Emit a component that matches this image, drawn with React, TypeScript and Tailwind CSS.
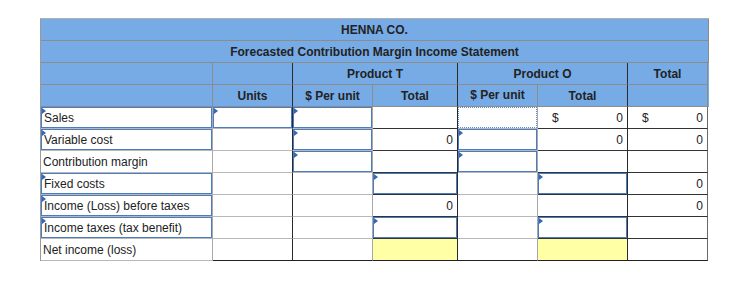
import React from "react";

type Kind = "plain" | "input" | "dotted" | "yellow";
type Cell = { k: Kind; t?: string; d?: boolean };

const cols = [
  { w: "w-[172px]", r: "border-r-[#a8a8a8]", b: "border-b-[#b8b8b8]" },
  { w: "w-[80px]", r: "border-r-[#2a2a2a]", b: "border-b-[#b8b8b8]" },
  { w: "w-[80px]", r: "border-r-[#a8a8a8]", b: "border-b-[#b8b8b8]" },
  { w: "w-[85px]", r: "border-r-[#2a2a2a]", b: "border-b-[#333333]" },
  { w: "w-[80px]", r: "border-r-[#a8a8a8]", b: "border-b-[#b8b8b8]" },
  { w: "w-[90px]", r: "border-r-[#2a2a2a]", b: "border-b-[#333333]" },
  { w: "w-[80px]", r: "border-r-[#6a6a6a]", b: "border-b-[#333333]" },
];

const P: Cell = { k: "plain" };
const I: Cell = { k: "input" };
const Z: Cell = { k: "plain", t: "0" };
const Y: Cell = { k: "yellow" };

const rows: Cell[][] = [
  [{ k: "input", t: "Sales" }, I, I, P, { k: "dotted" }, { k: "plain", t: "0", d: true }, { k: "plain", t: "0", d: true }],
  [{ k: "input", t: "Variable cost" }, P, I, Z, I, Z, Z],
  [{ k: "plain", t: "Contribution margin" }, P, I, P, I, P, P],
  [{ k: "input", t: "Fixed costs" }, P, P, I, P, I, Z],
  [{ k: "input", t: "Income (Loss) before taxes" }, P, P, Z, P, P, Z],
  [{ k: "input", t: "Income taxes (tax benefit)" }, P, P, I, P, I, P],
  [{ k: "plain", t: "Net income (loss)" }, P, P, Y, P, Y, P],
];

function Flag() {
  return (
    <span className="absolute left-0 top-0 h-0 w-0 border-l-[4px] border-y-[3px] border-l-[#3467b8] border-y-transparent" />
  );
}

function Content({ c, col }: { c: Cell; col: number }) {
  if (col === 0) {
    return <span className="pl-[2px] leading-[20px] whitespace-nowrap">{c.t}</span>;
  }
  if (c.d) {
    return (
      <div className="flex h-full w-full items-center justify-between pl-[14px] pr-[4px]">
        <span>$</span>
        <span>{c.t}</span>
      </div>
    );
  }
  if (c.t) {
    return <div className="flex h-full w-full items-center justify-end pr-[4px]">{c.t}</div>;
  }
  return null;
}

function DataCell({ c, col, last }: { c: Cell; col: number; last: boolean }) {
  const meta = cols[col];
  const bg = c.k === "yellow" ? "bg-[#ffffa6]" : "bg-white";
  const bottom = last && col >= 1 ? "border-b-[#222222]" : meta.b;
  return (
    <div className={`${meta.w} ${meta.r} ${bottom} ${bg} h-[22px] shrink-0 border-r border-b box-border`}>
      {c.k === "input" ? (
        <div className="relative flex h-full w-full items-center border border-[#4b7cc0]">
          <Flag />
          <Content c={c} col={col} />
        </div>
      ) : c.k === "dotted" ? (
        <div className="h-full w-full border border-dotted border-[#5b8fd4]" />
      ) : (
        <div className="flex h-full w-full items-center">
          <Content c={c} col={col} />
        </div>
      )}
    </div>
  );
}

export default function App() {
  return (
    <div
      className="min-h-[299px] w-[753px] bg-white pl-[40px] pt-[18px] text-[12px] text-[#222]"
      style={{ fontFamily: '"Liberation Sans", Arial, sans-serif' }}
    >
      <div className="inline-flex flex-col border-l border-t border-l-[#9a9a9a] border-t-[#b0b0b0]">
        {/* Header row 1 */}
        <div className="flex h-[22px] w-[668px] items-center justify-center border-b border-r border-[#8c8c8c] bg-[#77abe6] font-bold">
          HENNA CO.
        </div>
        {/* Header row 2 */}
        <div className="flex h-[22px] w-[668px] items-center justify-center border-b border-r border-[#8c8c8c] bg-[#77abe6] font-bold">
          Forecasted Contribution Margin Income Statement
        </div>
        {/* Header row 3 */}
        <div className="flex bg-[#77abe6] font-bold">
          <div className="h-[22px] w-[172px] border-b border-r border-[#8c8c8c]" />
          <div className="h-[22px] w-[80px] border-b border-r border-b-[#8c8c8c] border-r-[#2a2a2a]" />
          <div className="flex h-[22px] w-[165px] items-center justify-center border-b border-r border-b-[#8c8c8c] border-r-[#2a2a2a]">
            Product T
          </div>
          <div className="flex h-[22px] w-[170px] items-center justify-center border-b border-r border-b-[#8c8c8c] border-r-[#2a2a2a]">
            Product O
          </div>
          <div className="flex h-[22px] w-[80px] items-center justify-center border-b border-r border-[#8c8c8c]">
            Total
          </div>
        </div>
        {/* Header row 4 */}
        <div className="flex bg-[#77abe6] font-bold">
          <div className="h-[22px] w-[172px] border-b border-r border-[#8c8c8c]" />
          <div className="flex h-[22px] w-[80px] items-center justify-center border-b border-r border-b-[#8c8c8c] border-r-[#2a2a2a]">
            Units
          </div>
          <div className="flex h-[22px] w-[80px] items-center justify-center border-b border-r border-[#8c8c8c]">
            $ Per unit
          </div>
          <div className="flex h-[22px] w-[85px] items-center justify-center border-b border-r border-b-[#8c8c8c] border-r-[#2a2a2a]">
            Total
          </div>
          <div className="flex h-[22px] w-[80px] items-center justify-center border-b border-r border-[#8c8c8c] pb-[2px]">
            $ Per unit
          </div>
          <div className="flex h-[22px] w-[90px] items-center justify-center border-b border-r border-b-[#8c8c8c] border-r-[#2a2a2a]">
            Total
          </div>
          <div className="h-[22px] w-[80px] border-b border-r border-[#8c8c8c]" />
        </div>
        {/* Data rows */}
        {rows.map((r, ri) => (
          <div key={ri} className="flex">
            {r.map((c, ci) => (
              <DataCell key={ci} c={c} col={ci} last={ri === rows.length - 1} />
            ))}
          </div>
        ))}
      </div>
    </div>
  );
}
